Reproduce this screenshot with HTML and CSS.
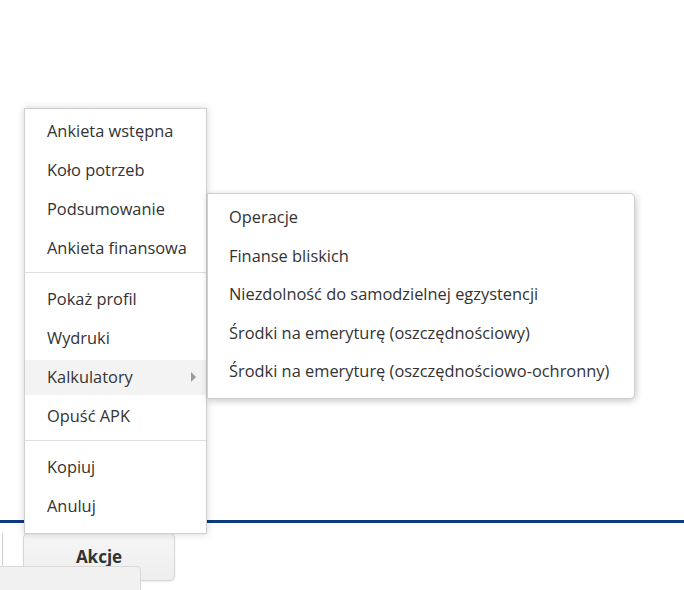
FILE: index.html
```html
<!DOCTYPE html>
<html lang="pl">
<head>
<meta charset="utf-8">
<link rel="stylesheet" href="styles.css">
</head>
<body>
<div class="page">
  <div class="blank"></div>
  <div class="rule"></div>
  <div class="toolbar">
    <div class="edge"></div>
    <button class="btn">Akcje</button>
  </div>
  <div class="tray"></div>
</div>

<div class="menu">
  <ul class="group">
    <li class="item">Ankieta wstępna</li>
    <li class="item">Koło potrzeb</li>
    <li class="item">Podsumowanie</li>
    <li class="item">Ankieta finansowa</li>
  </ul>
  <div class="sep"></div>
  <ul class="group">
    <li class="item">Pokaż profil</li>
    <li class="item">Wydruki</li>
    <li class="item active has-sub">Kalkulatory
      <span class="caret"></span>
      <ul class="submenu">
        <li class="item">Operacje</li>
        <li class="item">Finanse bliskich</li>
        <li class="item">Niezdolność do samodzielnej egzystencji</li>
        <li class="item">Środki na emeryturę (oszczędnościowy)</li>
        <li class="item">Środki na emeryturę (oszczędnościowo-ochronny)</li>
      </ul>
    </li>
    <li class="item">Opuść APK</li>
  </ul>
  <div class="sep"></div>
  <ul class="group">
    <li class="item">Kopiuj</li>
    <li class="item">Anuluj</li>
  </ul>
</div>
</body>
</html>
```

FILE: styles.css
```css
* { box-sizing: border-box; }
html, body { margin: 0; padding: 0; }
body {
  width: 684px;
  height: 590px;
  overflow: hidden;
  background: #fff;
  font-family: "Open Sans", "Liberation Sans", sans-serif;
  color: #333;
  position: relative;
}
.page { display: flex; flex-direction: column; }
.blank { height: 520px; }
.rule { height: 3px; background: #0b3a82; }
.toolbar {
  display: flex;
  align-items: flex-start;
  padding-top: 10px;
}
.edge {
  width: 3px;
  height: 33px;
  border-right: 1px solid #cfcfcf;
}
.btn {
  margin-left: 20px;
  width: 152px;
  height: 48px;
  border: 1px solid #d6d6d6;
  border-radius: 5px;
  background: linear-gradient(#f6f6f6, #eeeeee);
  font-family: "Open Sans", "Liberation Sans", sans-serif;
  font-weight: 700;
  font-size: 17px;
  color: #333;
  padding: 0 0 2px 0;
  box-shadow: 0 1px 2px rgba(0,0,0,0.08);
}
.tray {
  position: absolute;
  left: -1px;
  top: 566px;
  width: 142px;
  height: 30px;
  background: #f1f1f1;
  border: 1px solid #d9d9d9;
  border-radius: 0 4px 0 0;
}

ul { list-style: none; margin: 0; padding: 0; }

.menu {
  position: absolute;
  left: 24px;
  top: 108px;
  width: 183px;
  background: #fff;
  border: 1px solid #cfcfcf;
  padding: 5px 0 9px;
  box-shadow: 0 0 7px rgba(0,0,0,0.18);
  font-size: 16.4px;
}
.group { display: flex; flex-direction: column; gap: 4px; }
.item {
  height: 35px;
  line-height: 34px;
  padding-left: 22px;
  white-space: nowrap;
  position: relative;
}
.item.active { background: #f3f3f3; }
.sep {
  height: 1px;
  background: #dedede;
  margin: 6px 0 9px;
}
.caret {
  position: absolute;
  right: 10px;
  top: 12px;
  width: 0;
  height: 0;
  border-top: 5px solid transparent;
  border-bottom: 5px solid transparent;
  border-left: 5px solid #9a9a9a;
}
.submenu {
  position: absolute;
  left: calc(100% + 1px);
  top: -167px;
  width: 428px;
  background: #fff;
  border: 1px solid #cfcfcf;
  border-radius: 0 5px 5px 0;
  padding: 6px 0 9px;
  display: flex;
  flex-direction: column;
  gap: 3.5px;
  box-shadow: 1px 2px 7px rgba(0,0,0,0.22);
}
.submenu .item { padding-left: 21px; background: #fff; }
```
